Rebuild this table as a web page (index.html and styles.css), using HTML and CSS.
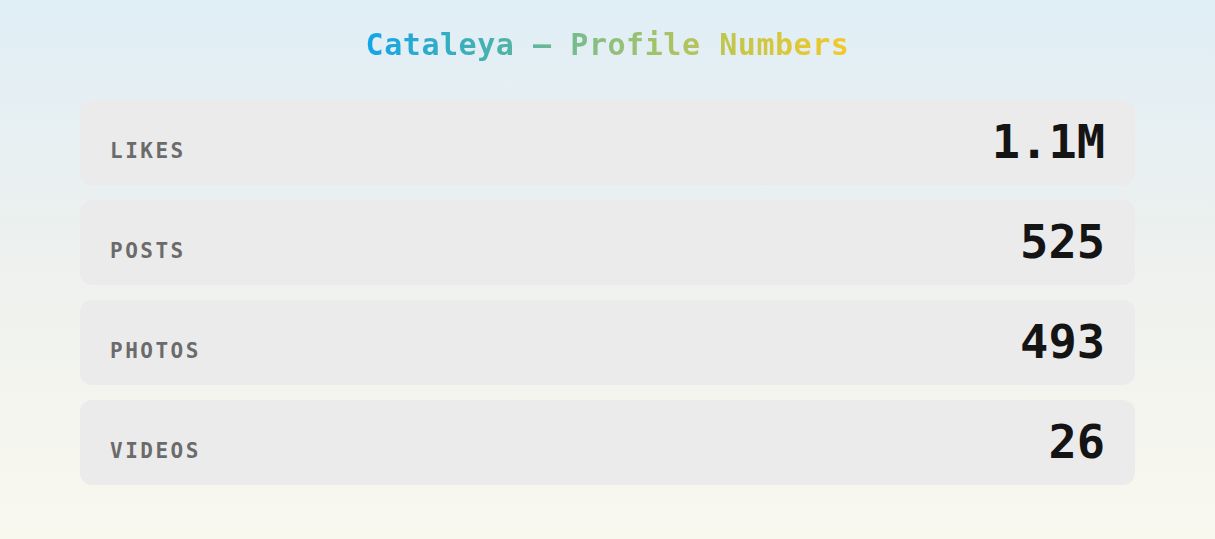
FILE: index.html
```html
<!DOCTYPE html>
<html lang="en">
<head>
<meta charset="utf-8">
<title>Cataleya — Profile Numbers</title>
<link rel="stylesheet" href="styles.css">
</head>
<body>
<main class="page">
  <h1 class="title">Cataleya — Profile Numbers</h1>
  <ul class="stats">
    <li class="stat"><span class="label">Likes</span><span class="value">1.1M</span></li>
    <li class="stat"><span class="label">Posts</span><span class="value">525</span></li>
    <li class="stat"><span class="label">Photos</span><span class="value">493</span></li>
    <li class="stat"><span class="label">Videos</span><span class="value">26</span></li>
  </ul>
</main>
</body>
</html>
```

FILE: styles.css
```css
html, body {
  margin: 0;
  padding: 0;
  height: 100%;
}
body {
  background: linear-gradient(180deg, #e0eef6 0%, #eef1ee 50%, #f9f8ef 100%);
  font-family: "DejaVu Sans Mono", "Liberation Mono", monospace;
  min-height: 539px;
}
.page {
  padding: 27px 80px 0;
}
.title {
  font-size: 30px;
  font-weight: bold;
  line-height: 35px;
  letter-spacing: 0.55px;
  background: linear-gradient(90deg, #12a5e8 0%, #4cb2aa 28%, #8dbf7e 50%, #c4c64c 76%, #f4c826 100%);
  -webkit-background-clip: text;
  background-clip: text;
  color: transparent;
  width: fit-content;
  margin: 0 auto;
}
.stats {
  list-style: none;
  margin: 38px 0 0;
  padding: 0;
  display: flex;
  flex-direction: column;
  gap: 15px;
}
.stat {
  background: #ebebeb;
  border-radius: 12px;
  padding: 14px 30px 15px;
  display: flex;
  justify-content: space-between;
  align-items: baseline;
}
.label {
  text-transform: uppercase;
  font-size: 21px;
  font-weight: bold;
  letter-spacing: 2.5px;
  color: #6b6b6b;
}
.value {
  font-size: 47px;
  line-height: 56px;
  font-weight: bold;
  color: #141414;
}
```
